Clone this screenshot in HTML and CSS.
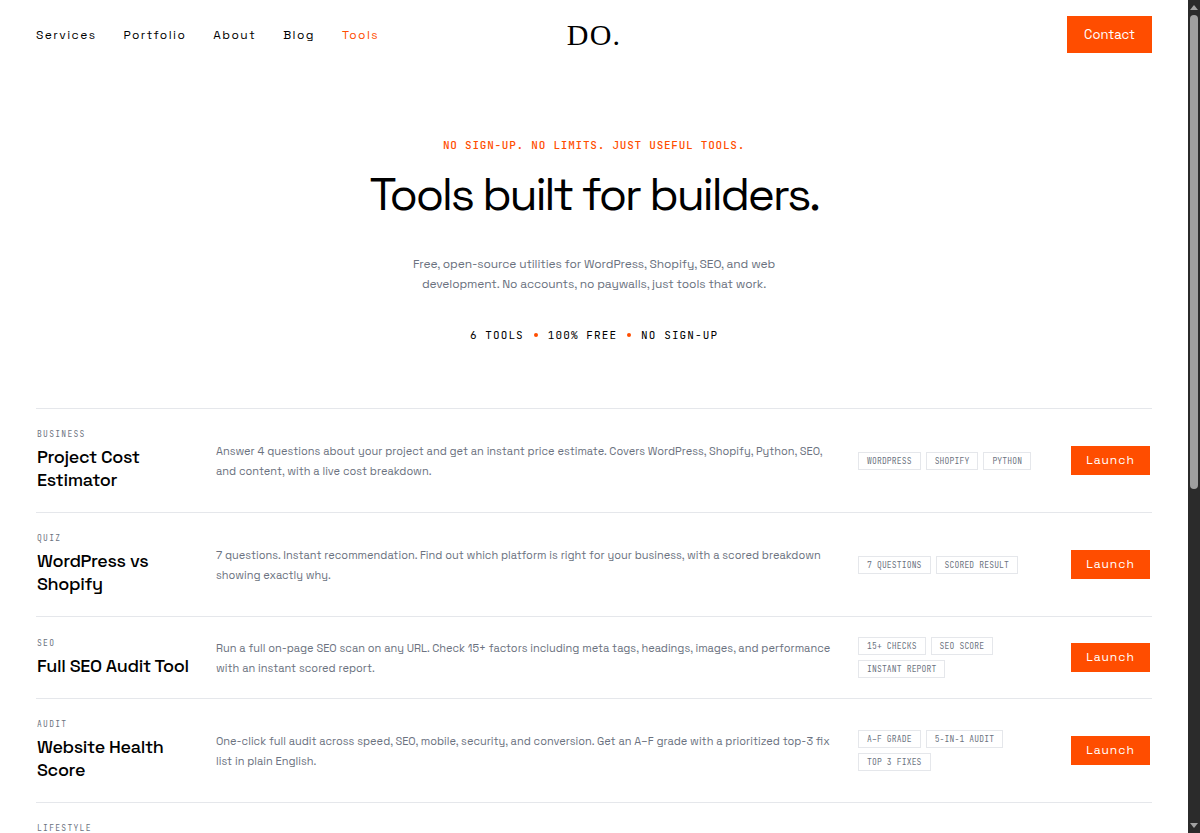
FILE: index.html
```
<!DOCTYPE html>
<html lang="en">
<head>
<meta charset="utf-8">
<meta name="viewport" content="width=device-width, initial-scale=1">
<title>Tools | DO.</title>
<link rel="stylesheet" href="styles.css">
</head>
<body>
<div class="page">
  <header class="header">
    <nav class="nav" aria-label="Main">
      <a href="#services">Services</a>
      <a href="#portfolio">Portfolio</a>
      <a href="#about">About</a>
      <a href="#blog">Blog</a>
      <a class="active" href="#tools">Tools</a>
    </nav>
    <a class="logo" href="#home">DO.</a>
    <a class="contact" href="#contact">Contact</a>
  </header>
  <main>
    <section class="hero">
      <p class="eyebrow">No sign-up. No limits. Just useful tools.</p>
      <h1>Tools built for builders.</h1>
      <p class="intro">Free, open-source utilities for WordPress, Shopify, SEO, and web development. No accounts, no paywalls, just tools that work.</p>
      <p class="stats"><span>6 Tools</span><i class="dot"></i><span>100% Free</span><i class="dot"></i><span>No sign-up</span></p>
    </section>
    <section class="tools" id="tools">
      <article class="tool">
        <div><p class="category">Business</p><h2>Project Cost Estimator</h2></div>
        <p class="description">Answer 4 questions about your project and get an instant price estimate. Covers WordPress, Shopify, Python, SEO, and content, with a live cost breakdown.</p>
        <ul class="tags"><li>WordPress</li><li>Shopify</li><li>Python</li></ul>
        <a class="launch" href="#estimator">Launch</a>
      </article>
      <article class="tool">
        <div><p class="category">Quiz</p><h2>WordPress vs Shopify</h2></div>
        <p class="description">7 questions. Instant recommendation. Find out which platform is right for your business, with a scored breakdown showing exactly why.</p>
        <ul class="tags"><li>7 questions</li><li>Scored result</li></ul>
        <a class="launch" href="#quiz">Launch</a>
      </article>
      <article class="tool">
        <div><p class="category">SEO</p><h2>Full SEO Audit Tool</h2></div>
        <p class="description">Run a full on-page SEO scan on any URL. Check 15+ factors including meta tags, headings, images, and performance with an instant scored report.</p>
        <ul class="tags"><li>15+ checks</li><li>SEO score</li><li>Instant report</li></ul>
        <a class="launch" href="#seo">Launch</a>
      </article>
      <article class="tool">
        <div><p class="category">Audit</p><h2>Website Health Score</h2></div>
        <p class="description">One-click full audit across speed, SEO, mobile, security, and conversion. Get an A–F grade with a prioritized top-3 fix list in plain English.</p>
        <ul class="tags"><li>A–F grade</li><li>5-in-1 audit</li><li>Top 3 fixes</li></ul>
        <a class="launch" href="#health">Launch</a>
      </article>
      <article class="tool">
        <div><p class="category">Lifestyle</p></div>
      </article>
    </section>
  </main>
</div>
<div class="scrollbar" aria-hidden="true">
  <svg class="arrow" viewBox="0 0 8 5"><path d="M4 0 8 5H0z"/></svg>
  <div class="track"><div class="thumb"></div></div>
  <svg class="arrow" viewBox="0 0 8 5"><path d="M0 0H8L4 5z"/></svg>
</div>
</body>
</html>
```
FILE: styles.css
```
* { box-sizing: border-box; }
body {
  margin: 0;
  height: 100vh;
  overflow: hidden;
  display: flex;
  background: #fff;
  color: #000;
  font-family: "Space Grotesk", Inter, sans-serif;
}
h1, h2, p, ul { margin: 0; padding: 0; font-weight: 400; }
a { color: inherit; text-decoration: none; }

.page { flex: 1; min-width: 0; height: 100%; overflow: hidden; }

.header {
  display: grid;
  grid-template-columns: 1fr auto 1fr;
  align-items: center;
  padding: 16px 36px 0;
}
.nav { display: flex; gap: 27px; font-size: 12px; letter-spacing: 0.12em; }
.active { color: #ff4d00; }
.logo { font: 30px/36px "Liberation Serif", serif; letter-spacing: 0.04em; }
.contact {
  justify-self: end;
  padding: 0 17px;
  background: #ff4d00;
  color: #fff;
  font-size: 13px;
  line-height: 37px;
}

.hero {
  display: flex;
  flex-direction: column;
  align-items: center;
  padding: 84px 36px 65px;
  text-align: center;
}
.eyebrow, .stats, .category, .tags {
  font-family: "JetBrains Mono", "Liberation Mono", monospace;
  text-transform: uppercase;
}
.eyebrow { color: #ff4d00; font-size: 11px; line-height: 16px; letter-spacing: 0.07em; font-weight: 500; }
h1 { margin-top: 13px; font-size: 46px; line-height: 56px; letter-spacing: -0.05em; }
.intro { max-width: 384px; margin-top: 32px; color: #6b7280; font-size: 12px; line-height: 20px; letter-spacing: -0.01em; }
.stats { display: flex; align-items: center; gap: 10px; margin-top: 33px; font-size: 11px; line-height: 16px; letter-spacing: 0.1em; }
.dot { width: 4px; height: 4px; border-radius: 50%; background: #ff4d00; }

.tools { margin: 0 36px; }
.tool {
  display: grid;
  grid-template-columns: 153px 1fr 187px 79px;
  column-gap: 26px;
  align-items: center;
  padding: 20px 2px 20px 1px;
  border-top: 1px solid #e5e7eb;
}
.category { color: #6b7280; font-size: 8px; line-height: 11px; letter-spacing: 0.16em; }
h2 { margin-top: 5px; padding-bottom: 1px; font-size: 18px; line-height: 23px; font-weight: 500; letter-spacing: -0.02em; }
.description { color: #6b7280; font-size: 11px; line-height: 20px; }
.tags { display: flex; flex-wrap: wrap; gap: 5px; list-style: none; color: #6b7280; font-size: 8px; line-height: 16px; letter-spacing: 0.02em; }
.tags li { padding: 0 8px; border: 1px solid #e5e7eb; }
.launch { background: #ff4d00; color: #fff; font-size: 12px; line-height: 29px; letter-spacing: 1px; text-align: center; }

.scrollbar {
  width: 12px;
  height: 100%;
  display: flex;
  flex-direction: column;
  align-items: center;
  padding: 5px 0;
  background: #2b2b2b;
}
.arrow { width: 8px; height: 5px; fill: #a3a3a3; }
.track { flex: 1; width: 8px; padding: 5px 0; }
.thumb { height: 59%; border-radius: 4px; background: #9f9f9f; }
```
